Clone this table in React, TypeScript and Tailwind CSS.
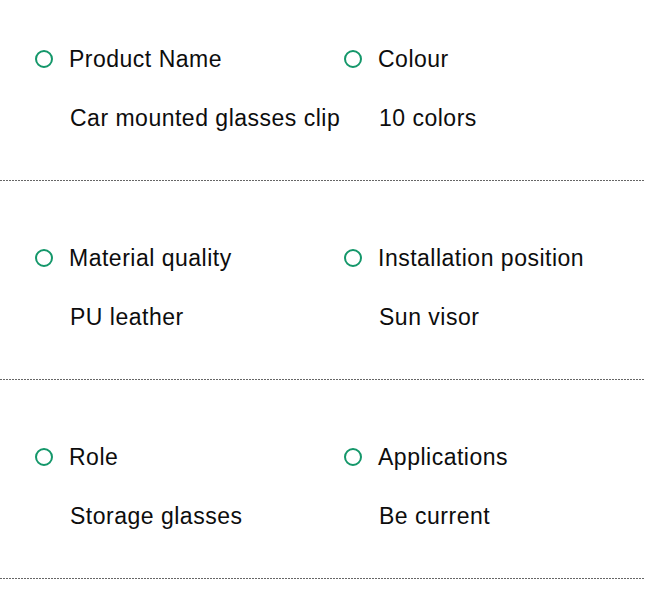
import React from "react";

const rows: [string, string, string, string][] = [
  ["Product Name", "Car mounted glasses clip", "Colour", "10 colors"],
  ["Material quality", "PU leather", "Installation position", "Sun visor"],
  ["Role", "Storage glasses", "Applications", "Be current"],
];

function Item({ title, value }: { title: string; value: string }) {
  return (
    <div className="flex flex-col">
      <div className="flex items-center h-[30px]">
        <span className="w-[18px] h-[18px] rounded-full border-2 border-[#14976a] shrink-0" />
        <span className="ml-[16px] leading-[30px]">{title}</span>
      </div>
      <div className="mt-[29px] ml-[35px] h-[30px] leading-[30px]">{value}</div>
    </div>
  );
}

export default function App() {
  return (
    <div
      className="w-[645px] h-[613px] bg-white text-[#0d0d0d] text-[23px] tracking-[0.5px] pt-[44px] overflow-hidden"
      style={{ fontFamily: '"Liberation Sans", Arial, sans-serif' }}
    >
      {rows.map((r, i) => (
        <div key={i} className={i === 0 ? "" : "pt-[62px]"}>
          <div className="grid grid-cols-[309px_1fr] pl-[35px]">
            <Item title={r[0]} value={r[1]} />
            <Item title={r[2]} value={r[3]} />
          </div>
          <div className="mt-[47px] h-px w-full bg-[repeating-linear-gradient(to_right,#666_0_2px,transparent_2px_3px)]" />
        </div>
      ))}
    </div>
  );
}
